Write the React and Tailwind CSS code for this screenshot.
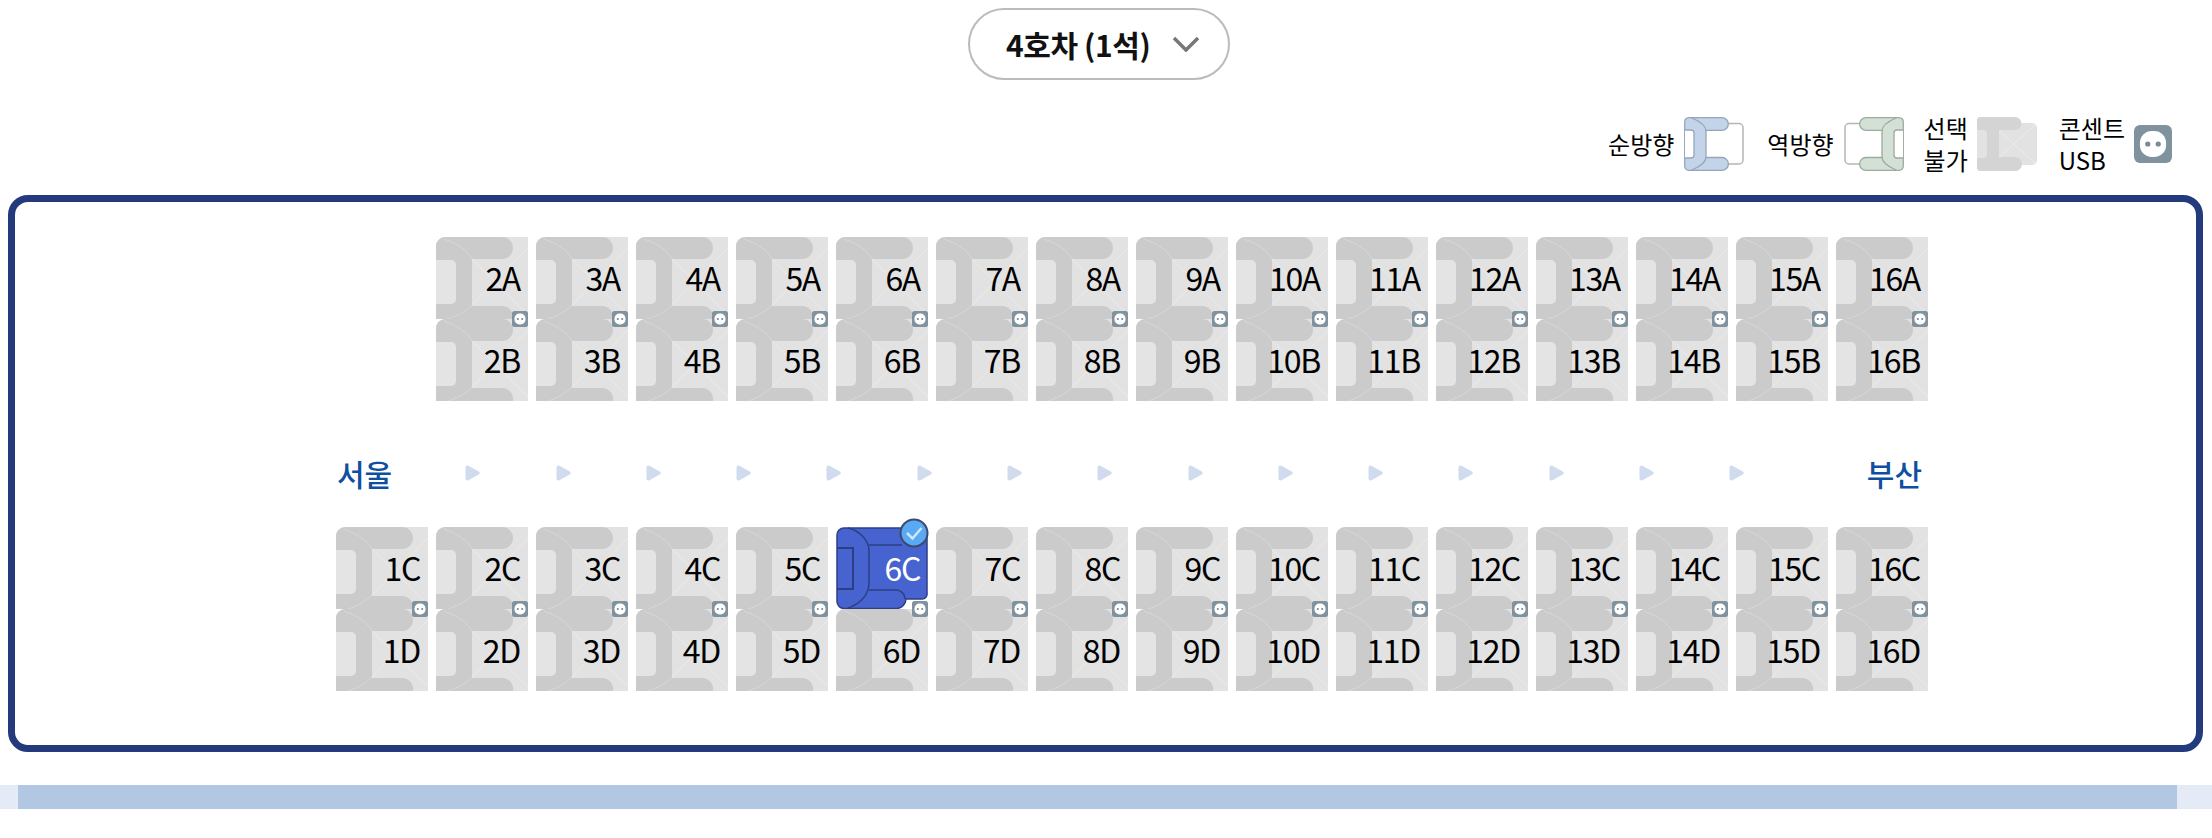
import React from 'react';

const FONT = "font-['Noto_Sans_CJK_KR','Noto_Sans','Liberation_Sans',sans-serif]";
const range = (from, to) => Array.from({ length: to - from + 1 }, (_, i) => from + i);

const SocketBadge = ({ className }) => (
  <svg viewBox="0 0 16 16" className={className}>
    <rect width="16" height="16" rx="2.5" fill="#7f929d" />
    <rect x="2.5" y="2.5" width="11" height="11" rx="5" fill="#fff" />
    <circle cx="5.800" cy="8" r="1.100" fill="#7a8a95" />
    <circle cx="10.200" cy="8" r="1.100" fill="#7a8a95" />
  </svg>
);

const SeatShape = ({ selected }) => {
  if (selected) {
    return (
      <svg viewBox="0 0 92 82" className="absolute inset-0 w-[92px] h-[82px]">
        <path d="M8 1H85a6 6 0 0 1 6 6V66a5 5 0 0 1-5 6H70a10 10 0 0 1-9 9.500H8a7 7 0 0 1-7-7V8a7 7 0 0 1 7-7Z" fill="#4763cf" stroke="#2c3f85" strokeWidth="1.500" />
        <path d="M12 1C24 4 33 13 33 24V56C33 68 24 77 12 81" fill="none" stroke="#2c3f85" strokeWidth="1.500" />
        <path d="M1 21H17V62H1" fill="none" stroke="#2c3f85" strokeWidth="2" />
        <path d="M33 18H66M33 63H60C65 63 69 67 69 72" fill="none" stroke="#2c3f85" strokeWidth="1.500" />
      </svg>
    );
  }
  return (
    <svg viewBox="0 0 92 82" className="absolute inset-0 w-[92px] h-[82px]">
      <path d="M0 9a9 9 0 0 1 9-9H92V82H0Z" fill="#e2e2e2" />
      <path d="M0 9a9 9 0 0 1 9-9H66a11 11 0 0 1 0 22H36V69H66a11 11 0 0 1 11 13H0Z" fill="#cbcbcb" />
      <path d="M0 23H15a5 5 0 0 1 5 5V62a5 5 0 0 1-5 5H0Z" fill="#e4e4e4" />
      <path d="M36 22L92 78M92 11L36 68" stroke="#ebebeb" strokeWidth="1" fill="none" />
      <path d="M8 2C22 7 32 14 36 22M36 68C30 74 24 78 12 82" stroke="#d8d8d8" strokeWidth="1" fill="none" />
    </svg>
  );
};

const Seat = ({ label, socket, selected }) => (
  <div className="relative w-[92px] h-[82px] shrink-0">
    <SeatShape selected={selected} />
    <div className={`relative flex h-full items-center justify-end pr-[8px] pb-[2px] text-[32px] tracking-[-1.300px] ${selected ? 'text-white' : 'text-black'}`}>
      {label}
    </div>
    {socket && <SocketBadge className="absolute right-0 bottom-[-8px] z-10 w-4 h-4" />}
    {selected && (
      <svg viewBox="0 0 30 30" className="absolute right-[-1px] top-[-9px] z-10 w-[30px] h-[30px]">
        <circle cx="15" cy="15" r="13.500" fill="#5aa9f4" stroke="#3c4a6b" strokeWidth="2" />
        <path d="M8 15l5.500 5.500L22.500 10" fill="none" stroke="#cfe6fb" strokeWidth="2.500" />
      </svg>
    )}
  </div>
);

const SeatRow = ({ from, letter, socket, selectedSeat }) => (
  <div className="flex justify-end gap-2">
    {range(from, 16).map((n) => (
      <Seat key={n} label={`${n}${letter}`} socket={socket} selected={selectedSeat === `${n}${letter}`} />
    ))}
  </div>
);

const LegendSeat = ({ fill, line, frame, flip }) => (
  <svg viewBox="0 0 60 54" className={`w-[60px] h-[54px] shrink-0 ${flip ? '-scale-x-100' : ''}`}>
    <path d="M44 6.500H55a4 4 0 0 1 4 4V43a4 4 0 0 1-4 4H44" fill="#fff" stroke={frame} strokeWidth="1.500" />
    <path d="M5 .7H38a6.300 6.300 0 0 1 0 12.600H22V40.500H38a6.400 6.400 0 0 1 0 12.800H5a4.500 4.500 0 0 1-4.300-4.300V5A4.500 4.500 0 0 1 5 .7Z" fill={fill} stroke={line} strokeWidth="1.300" />
    <path d="M1 13H7a3 3 0 0 1 3 3V38a3 3 0 0 1-3 3H1" fill="#fff" stroke={line} strokeWidth="1.300" />
    <path d="M8 1C15 4 22 8 22 14M22 40C22 46 15 50 8 53" fill="none" stroke={line} strokeWidth="1.300" />
  </svg>
);

const DisabledSeat = () => (
  <svg viewBox="0 0 60 54" className="w-[60px] h-[54px] shrink-0">
    <path d="M4 0H38a5 5 0 0 1 5 6H55a5 5 0 0 1 5 5V43a5 5 0 0 1-5 5H43a5 5 0 0 1-5 6H4a4 4 0 0 1-4-4V4a4 4 0 0 1 4-4Z" fill="#e2e2e2" />
    <path d="M0 4a4 4 0 0 1 4-4H38a6.500 6.500 0 0 1 0 13H22V40H38a7 7 0 0 1 0 14H4a4 4 0 0 1-4-4Z" fill="#d4d4d4" />
    <path d="M0 13H7a3 3 0 0 1 3 3V38a3 3 0 0 1-3 3H0Z" fill="#e2e2e2" />
    <path d="M22 14L58 46M58 8L22 40" stroke="#ececec" strokeWidth="1" />
  </svg>
);

const App = () => (
  <div className={`w-[2212px] h-[838px] overflow-hidden bg-white ${FONT}`}>
    <div className="flex justify-start pt-2 pl-[968px]">
      <button className="flex items-center w-[262px] h-[72px] pl-[36px] rounded-full border-2 border-[#bbbbbb] bg-white">
        <span className="text-[30px] font-bold text-[#111] tracking-[-0.4px]">4호차 (1석)</span>
        <svg viewBox="0 0 28 16" className="ml-[21px] w-[28px] h-4">
          <path d="M2 2l12 12L26 2" fill="none" stroke="#777" strokeWidth="3.500" />
        </svg>
      </button>
    </div>

    <div className="flex justify-end items-center h-[54px] mt-[37px] pr-[40px] text-[24px] leading-[32px] text-black">
      <span className="mr-[10px]">순방향</span>
      <LegendSeat fill="#c2d3ea" line="#97a5b8" frame="#b5b5b5" />
      <span className="ml-[23px] mr-[10px]">역방향</span>
      <LegendSeat fill="#d3e0d5" line="#9cab9f" frame="#b5b5b5" flip />
      <span className="ml-[20px] mr-[9px]">선택<br />불가</span>
      <DisabledSeat />
      <span className="ml-[22px] mr-[9px]">콘센트<br />USB</span>
      <SocketBadge className="w-[38px] h-[38px] shrink-0" />
    </div>

    <div className="mt-[24px] ml-2 w-[2195px] h-[557px] rounded-[20px] border-[7px] border-[#233b7d] bg-white pt-[35px] pr-[268px]">
      <SeatRow from={2} letter="A" socket />
      <SeatRow from={2} letter="B" />
      <div className="flex items-center h-[40px] mt-[52px] mb-[34px] ml-[321px] pr-[6px] pl-[1px]">
        <span className="text-[30px] font-medium text-[#0f4f9f]">서울</span>
        <div className="flex gap-[75.3px] ml-[73px]">
          {range(1, 15).map((n) => (
            <svg key={n} viewBox="0 0 15 16" className="w-[15px] h-4">
              <path d="M.5 2.500a2 2 0 0 1 3-1.700L13.800 6.500a1.700 1.700 0 0 1 0 3L3.500 15.200a2 2 0 0 1-3-1.700Z" fill="#d0dcee" />
            </svg>
          ))}
        </div>
        <span className="ml-auto text-[30px] font-medium text-[#0f4f9f]">부산</span>
      </div>
      <SeatRow from={1} letter="C" socket selectedSeat="6C" />
      <SeatRow from={1} letter="D" />
    </div>

    <div className="mt-[33px] h-6 bg-[#e4ebf6]">
      <div className="ml-[18px] w-[2159px] h-full bg-[#b2c7e1]" />
    </div>
  </div>
);

export default App;
